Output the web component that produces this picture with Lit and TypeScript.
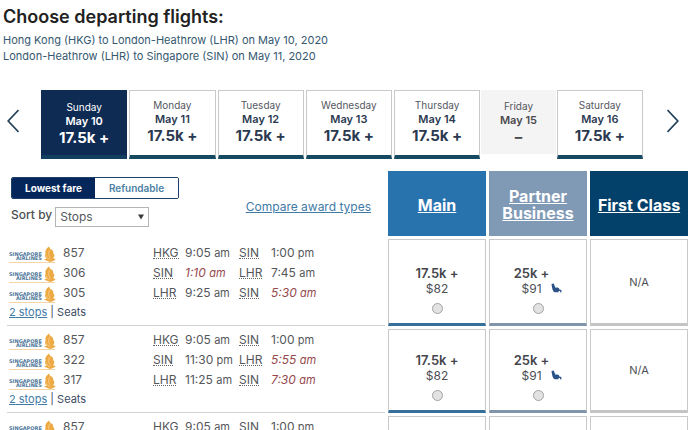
import { LitElement, html, css, nothing } from "lit";
import { customElement, property, state } from "lit/decorators.js";
import { classMap } from "lit/directives/class-map.js";

interface Day { name: string; date: string; price: string; }
interface Leg { flight: string; from: string; dep: string; depNext?: boolean; to: string; arr: string; arrNext?: boolean; }

const DAYS: Day[] = [
  { name: "Sunday", date: "May 10", price: "17.5k +" },
  { name: "Monday", date: "May 11", price: "17.5k +" },
  { name: "Tuesday", date: "May 12", price: "17.5k +" },
  { name: "Wednesday", date: "May 13", price: "17.5k +" },
  { name: "Thursday", date: "May 14", price: "17.5k +" },
  { name: "Friday", date: "May 15", price: "" },
  { name: "Saturday", date: "May 16", price: "17.5k +" },
];

const AIRPORTS: Record<string, string> = { HKG: "Hong Kong", SIN: "Singapore", LHR: "London-Heathrow" };

const TRIPS: Leg[][] = [
  [
    { flight: "857", from: "HKG", dep: "9:05 am", to: "SIN", arr: "1:00 pm" },
    { flight: "306", from: "SIN", dep: "1:10 am", depNext: true, to: "LHR", arr: "7:45 am" },
    { flight: "305", from: "LHR", dep: "9:25 am", to: "SIN", arr: "5:30 am", arrNext: true },
  ],
  [
    { flight: "857", from: "HKG", dep: "9:05 am", to: "SIN", arr: "1:00 pm" },
    { flight: "322", from: "SIN", dep: "11:30 pm", to: "LHR", arr: "5:55 am", arrNext: true },
    { flight: "317", from: "LHR", dep: "11:25 am", to: "SIN", arr: "7:30 am", arrNext: true },
  ],
  [
    { flight: "857", from: "HKG", dep: "9:05 am", to: "SIN", arr: "1:00 pm" },
  ],
];

@customElement("airline-logo")
export class AirlineLogo extends LitElement {
  static styles = css`
    :host { display: block; width: 47px; height: 18px; }
    svg { display: block; width: 47px; height: 18px; }
    text { font: 700 5px "DejaVu Sans", sans-serif; fill: #4f7799; }
  `;
  render() {
    return html`<svg viewBox="0 0 47 18" role="img" aria-label="Singapore Airlines">
      <text x="0" y="10">SINGAPORE</text>
      <text x="7" y="14">AIRLINES</text>
      <path d="M0 16.5H46" stroke="#f5d5a6" stroke-width="1" />
      <path d="M40 0.5C37 2.6 35.8 5 36.6 7.8C35.4 9.6 36 11.4 38 12.8L34.8 13.4L41 16C43.5 15.6 46 14.4 46.6 13L44 12.2C45.8 10.2 45.8 8.6 44.2 7C44.6 4.4 42.6 3 41.4 3.2Z" fill="#eda942" />
      <path d="M40.6 4C39 7 39.4 9.6 41.4 12.4M37 9.2C37.8 11.4 39 12.8 41 14" stroke="#fbdfae" stroke-width="0.6" fill="none" />
    </svg>`;
  }
}

@customElement("day-strip")
export class DayStrip extends LitElement {
  @property({ type: Number }) selected = 0;
  static styles = css`
    :host { display: block; }
    .strip { display: flex; align-items: flex-start; padding: 0 21px 0 7px; }
    .arrow { flex: none; width: 12px; height: 24px; margin-top: 19px; padding: 0; border: 0; background: none; }
    .arrow svg { display: block; }
    .days { flex: 1; display: flex; align-items: flex-start; margin: 0 24px 0 22px; }
    .day {
      flex: 86 1 0; box-sizing: border-box; min-width: 0; height: 69px; margin-left: 2px; padding: 7px 0 0;
      display: flex; flex-direction: column; align-items: center;
      border: 1px solid #c9c9cb; border-bottom: 4px solid #164a63; background: #fff; color: #2b3950;
      font-family: inherit; font-size: 11px; line-height: 14px;
    }
    .day:first-child { margin-left: 0; }
    .name { font-size: 10px; color: #55585f; }
    .date { font-weight: 600; }
    .price { font-size: 15px; line-height: 20px; font-weight: 700; }
    .active { padding-top: 9px; background: #0e2b54; border-color: #0e2b54; border-bottom-color: #123f60; color: #fff; }
    .active .name { color: #fff; }
    .none { flex-grow: 76; height: 64px; margin-left: 1px; padding-top: 9px; border: 0; background: #f4f4f4; color: #4a4a4e; }
    .none + .day { margin-left: 1px; }
  `;
  render() {
    return html`<nav class="strip" aria-label="Departure dates">
      <button class="arrow" aria-label="Earlier dates">
        <svg width="12" height="24" viewBox="0 0 12 24"><path d="M11.5 1L1.2 12L11.5 23" fill="none" stroke="#24425a" stroke-width="1.7" /></svg>
      </button>
      <div class="days">
        ${DAYS.map((d, i) => html`<button class=${classMap({ day: true, active: i === this.selected, none: !d.price })}>
          <span class="name">${d.name}</span><span class="date">${d.date}</span><span class="price">${d.price || "–"}</span>
        </button>`)}
      </div>
      <button class="arrow" aria-label="Later dates">
        <svg width="12" height="24" viewBox="0 0 12 24"><path d="M0.5 1L10.8 12L0.5 23" fill="none" stroke="#24425a" stroke-width="1.7" /></svg>
      </button>
    </nav>`;
  }
}

@customElement("app-root")
export class AppRoot extends LitElement {
  @state() private refundable = false;

  static styles = css`
    :host {
      display: block; height: 100vh; overflow-y: auto; scrollbar-width: none; background: #fff; color: #4c4f54;
      font-family: Inter, "Liberation Sans", sans-serif;
    }
    h1 { margin: 0; padding: 5px 3px 0; font-size: 18px; line-height: 23px; font-weight: 600; color: #222; }
    .routes { margin: 0 0 26px; padding: 4px 3px 0; font-size: 11px; line-height: 16px; color: #35586f; }
    .routes span { display: block; }
    a { color: #3f7ba6; text-decoration: underline; }
    .results { width: calc(100% - 13px); margin: 9px 0 0 4px; border-spacing: 3px; table-layout: fixed; }
    .fare-col { width: 98px; }
    th, td { padding: 0; font-weight: 400; text-align: left; }
    .controls { vertical-align: top; padding: 6px 14px 0 4px; }
    .toggle { display: flex; width: 168px; height: 22px; box-sizing: border-box; border: 1px solid #1b3f66; border-radius: 2px; overflow: hidden; }
    .toggle button { flex: 1; padding: 0; border: 0; background: #fff; color: #4b81a3; font: 600 10px/20px Inter, sans-serif; }
    .toggle .on { background: #04265a; color: #fff; font-weight: 700; }
    .tools { display: flex; justify-content: space-between; align-items: flex-start; }
    .sort { display: flex; gap: 3px; padding-top: 8px; font-size: 12px; line-height: 16px; font-weight: 500; }
    .picker { position: relative; display: block; }
    select {
      display: block; width: 94px; height: 20px; padding: 0 0 0 4px; margin: 0; border: 1px solid #b5b5b5; border-radius: 0;
      appearance: none; background: #fff; color: #55585c; font: 400 12px/18px Inter, sans-serif;
    }
    .picker svg { position: absolute; right: 5px; top: 7px; pointer-events: none; }
    .compare { font-size: 12px; line-height: 16px; }
    .fare { height: 65px; padding-top: 3px; box-sizing: border-box; text-align: center; vertical-align: middle; font-size: 16px; line-height: 17px; font-weight: 700; }
    .fare a { color: #fff; }
    .main { background: #2872ae; }
    .partner { background: #8099b5; }
    .first { background: #03406a; }
    .trip { vertical-align: top; height: 84px; padding-top: 1px; border-bottom: 1px solid #d2d2d2; box-sizing: border-box; }
    .lead .trip, .lead .offer { height: 87px; }
    .lead .trip { padding-top: 4px; }
    .leg { display: grid; grid-template-columns: 46px 98px 32px 54px 32px 1fr; height: 20px; line-height: 20px; font-size: 12px; padding-left: 2px; white-space: nowrap; color: #55575b; }
    .leg airline-logo { margin-top: 3px; }
    .number { padding-left: 8px; }
    .leg abbr { justify-self: start; text-decoration: none; }
    .leg abbr span { display: block; height: 15px; border-bottom: 1px dotted #666; }
    .meridiem { font-size: 11px; }
    .next { font-style: italic; color: #95494c; }
    .links { padding-left: 2px; font-size: 11px; line-height: 18px; color: #3c4a63; }
    .offer { box-sizing: border-box; height: 84px; border: 1px solid #c9c9c9; border-bottom: 3px solid #c4c4c4; text-align: center; vertical-align: bottom; }
    .offer.m { border-bottom-color: #356f9b; }
    .offer.p { border-bottom-color: #8095ac; }
    .offer.na { vertical-align: middle; font-size: 11px; }
    .offer label { display: flex; flex-direction: column; align-items: center; padding-bottom: 9px; font-size: 13px; line-height: 16px; }
    .points { font-weight: 600; color: #44464c; }
    .p .points, .p .cash { margin-right: 13px; }
    .cash { position: relative; font-size: 12px; }
    .seat { position: absolute; left: 100%; top: 2px; margin-left: 9px; }
    input { appearance: none; width: 11px; height: 11px; margin: 6px 0 0; border: 1px solid #a2a2a2; border-radius: 50%; background: #e2e2e2; }
  `;

  private offer(kind: "m" | "p", points: string, cash: string, trip: number) {
    return html`<td class="offer ${kind}">
      <label>
        <span class="points">${points}</span>
        <span class="cash">${cash}${kind === "p"
          ? html`<svg class="seat" width="11" height="11" viewBox="0 0 11 11"><path d="M0.5 1L2.8 0.4L4.2 4.6L7.8 5L8.4 6.4L10.4 7V9.6H9.4L9 8H7.6V9.2H3.6C1.6 8.4 1 4.6 0.5 1Z" fill="#2b5288" /><path d="M4 4.2L7 4.6" stroke="#8fb0d3" stroke-width="1" /></svg>`
          : nothing}</span>
        <input type="radio" name="fare" value="${trip}-${kind}" />
      </label>
    </td>`;
  }

  private time(value: string, next = false) {
    const [clock, meridiem] = value.split(" ");
    return html`<span class=${classMap({ next })}>${clock} <span class="meridiem">${meridiem}</span></span>`;
  }

  private leg(l: Leg) {
    return html`<div class="leg">
      <airline-logo></airline-logo>
      <span class="number">${l.flight}</span>
      <abbr title=${AIRPORTS[l.from]}><span>${l.from}</span></abbr>
      ${this.time(l.dep, l.depNext)}
      <abbr title=${AIRPORTS[l.to]}><span>${l.to}</span></abbr>
      ${this.time(l.arr, l.arrNext)}
    </div>`;
  }

  render() {
    return html`
      <h1>Choose departing flights:</h1>
      <p class="routes">
        <span>Hong Kong (HKG) to London-Heathrow (LHR) on May 10, 2020</span>
        <span>London-Heathrow (LHR) to Singapore (SIN) on May 11, 2020</span>
      </p>
      <day-strip></day-strip>
      <table class="results">
        <colgroup><col /><col class="fare-col" /><col class="fare-col" /><col class="fare-col" /></colgroup>
        <thead>
          <tr>
            <td class="controls">
              <div class="toggle">
                <button class=${classMap({ on: !this.refundable })} @click=${() => (this.refundable = false)}>Lowest fare</button>
                <button class=${classMap({ on: this.refundable })} @click=${() => (this.refundable = true)}>Refundable</button>
              </div>
              <div class="tools">
                <div class="sort">
                  <label for="sort">Sort by</label>
                  <span class="picker">
                    <select id="sort"><option>Stops</option></select>
                    <svg width="6" height="6" viewBox="0 0 6 6"><path d="M0 0.5H6L3 5.5Z" fill="#3c3c3c" /></svg>
                  </span>
                </div>
                <a class="compare" href="#compare">Compare award types</a>
              </div>
            </td>
            <th class="fare main" scope="col"><a href="#main">Main</a></th>
            <th class="fare partner" scope="col"><a href="#partner">Partner Business</a></th>
            <th class="fare first" scope="col"><a href="#first">First Class</a></th>
          </tr>
        </thead>
        <tbody>
          ${TRIPS.map((legs, i) => html`<tr class=${i === 0 ? "lead" : ""}>
            <td class="trip">
              ${legs.map((l) => this.leg(l))}
              ${legs.length > 1 ? html`<div class="links"><a href="#stops">${legs.length - 1} stops</a> | Seats</div>` : nothing}
            </td>
            ${this.offer("m", "17.5k +", "$82", i)}
            ${this.offer("p", "25k +", "$91", i)}
            <td class="offer na">N/A</td>
          </tr>`)}
        </tbody>
      </table>
    `;
  }
}
